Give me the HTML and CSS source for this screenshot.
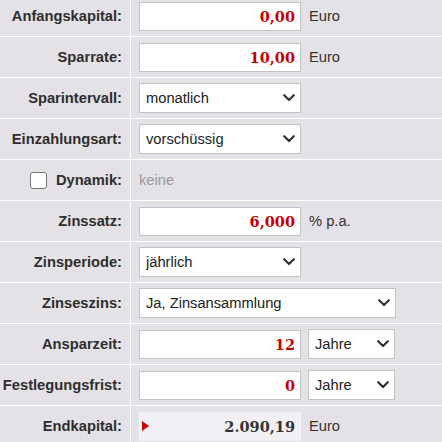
FILE: index.html
```html
<!DOCTYPE html>
<html lang="de">
<head>
<meta charset="utf-8">
<title>Sparrechner</title>
<link rel="stylesheet" href="styles.css">
</head>
<body>
<div class="form">
  <div class="row">
    <div class="label">Anfangskapital:</div>
    <div class="field"><input class="num" type="text" value="0,00"><span class="unit">Euro</span></div>
  </div>
  <div class="row">
    <div class="label">Sparrate:</div>
    <div class="field"><input class="num" type="text" value="10,00"><span class="unit">Euro</span></div>
  </div>
  <div class="row">
    <div class="label">Sparintervall:</div>
    <div class="field">
      <div class="sel w162"><select><option>monatlich</option></select><svg class="chev" viewBox="0 0 12 8" width="12" height="8"><polyline points="1.2,1.2 6,6 10.8,1.2" /></svg></div>
    </div>
  </div>
  <div class="row">
    <div class="label">Einzahlungsart:</div>
    <div class="field">
      <div class="sel w162"><select><option>vorschüssig</option></select><svg class="chev" viewBox="0 0 12 8" width="12" height="8"><polyline points="1.2,1.2 6,6 10.8,1.2" /></svg></div>
    </div>
  </div>
  <div class="row">
    <div class="label"><input class="check" type="checkbox"><span>Dynamik:</span></div>
    <div class="field"><span class="muted">keine</span></div>
  </div>
  <div class="row">
    <div class="label">Zinssatz:</div>
    <div class="field"><input class="num" type="text" value="6,000"><span class="unit">% p.a.</span></div>
  </div>
  <div class="row">
    <div class="label">Zinsperiode:</div>
    <div class="field">
      <div class="sel w162"><select><option>jährlich</option></select><svg class="chev" viewBox="0 0 12 8" width="12" height="8"><polyline points="1.2,1.2 6,6 10.8,1.2" /></svg></div>
    </div>
  </div>
  <div class="row">
    <div class="label">Zinseszins:</div>
    <div class="field">
      <div class="sel w257"><select><option>Ja, Zinsansammlung</option></select><svg class="chev" viewBox="0 0 12 8" width="12" height="8"><polyline points="1.2,1.2 6,6 10.8,1.2" /></svg></div>
    </div>
  </div>
  <div class="row">
    <div class="label">Ansparzeit:</div>
    <div class="field">
      <input class="num" type="text" value="12">
      <div class="sel w87"><select><option>Jahre</option></select><svg class="chev" viewBox="0 0 12 8" width="12" height="8"><polyline points="1.2,1.2 6,6 10.8,1.2" /></svg></div>
    </div>
  </div>
  <div class="row">
    <div class="label">Festlegungsfrist:</div>
    <div class="field">
      <input class="num" type="text" value="0">
      <div class="sel w87"><select><option>Jahre</option></select><svg class="chev" viewBox="0 0 12 8" width="12" height="8"><polyline points="1.2,1.2 6,6 10.8,1.2" /></svg></div>
    </div>
  </div>
  <div class="row">
    <div class="label">Endkapital:</div>
    <div class="field">
      <div class="result"><span class="marker"></span><span class="result-value">2.090,19</span></div>
      <span class="unit">Euro</span>
    </div>
  </div>
</div>
</body>
</html>
```
FILE: styles.css
```css
html, body {
  margin: 0;
  padding: 0;
  background: #e4e2e6;
}
body {
  font-family: "Liberation Sans", Arial, sans-serif;
  font-size: 14.7px;
  color: #333;
  overflow: hidden;
}
.form {
  margin-top: -4px;
}
.row {
  display: flex;
  height: 40px;
  border-bottom: 1px solid #fff;
}
.label {
  width: 131px;
  box-sizing: border-box;
  border-right: 1px solid #fff;
  padding-right: 8px;
  display: flex;
  align-items: center;
  justify-content: flex-end;
  font-weight: bold;
  color: #2e2e2e;
}
.field {
  flex: 1;
  display: flex;
  align-items: center;
  gap: 7px;
  padding-left: 8px;
}
.num {
  box-sizing: border-box;
  width: 162px;
  height: 29px;
  border: 1px solid #c3c3c3;
  border-radius: 0;
  background: #fff;
  padding: 0 5px 0 4px;
  margin: 0;
  text-align: right;
  font-family: "DejaVu Serif", Georgia, serif;
  font-weight: bold;
  font-size: 14.5px;
  color: #c40000;
  outline: none;
}
.unit {
  margin-left: 1px;
  color: #333;
}
.sel {
  position: relative;
  height: 30px;
}
.sel select {
  appearance: none;
  -webkit-appearance: none;
  box-sizing: border-box;
  width: 100%;
  height: 100%;
  margin: 0;
  border: 1px solid #c3c3c3;
  border-radius: 0;
  background: #fff;
  padding: 0 24px 0 6px;
  font-family: "Liberation Sans", Arial, sans-serif;
  font-size: 14.7px;
  color: #222;
  outline: none;
}
.w162 { width: 162px; }
.w257 { width: 257px; }
.w87 { width: 87px; }
.chev {
  position: absolute;
  right: 6px;
  top: 11px;
  pointer-events: none;
}
.chev polyline {
  fill: none;
  stroke: #333;
  stroke-width: 2.2;
  stroke-linecap: round;
  stroke-linejoin: round;
}
.check {
  appearance: none;
  -webkit-appearance: none;
  box-sizing: border-box;
  width: 17px;
  height: 17px;
  margin: 0 9px 0 0;
  border: 1.5px solid #767676;
  border-radius: 3px;
  background: #fff;
}
.muted {
  color: #9a9a9a;
}
.result {
  box-sizing: border-box;
  width: 162px;
  height: 29px;
  background: #f2f0f4;
  display: flex;
  align-items: center;
  justify-content: space-between;
  padding: 0 6px 0 3px;
}
.marker {
  width: 0;
  height: 0;
  border-top: 5.5px solid transparent;
  border-bottom: 5.5px solid transparent;
  border-left: 7px solid #d00000;
}
.result-value {
  font-family: "DejaVu Serif", Georgia, serif;
  font-weight: bold;
  font-size: 14.5px;
  color: #333;
}
```
